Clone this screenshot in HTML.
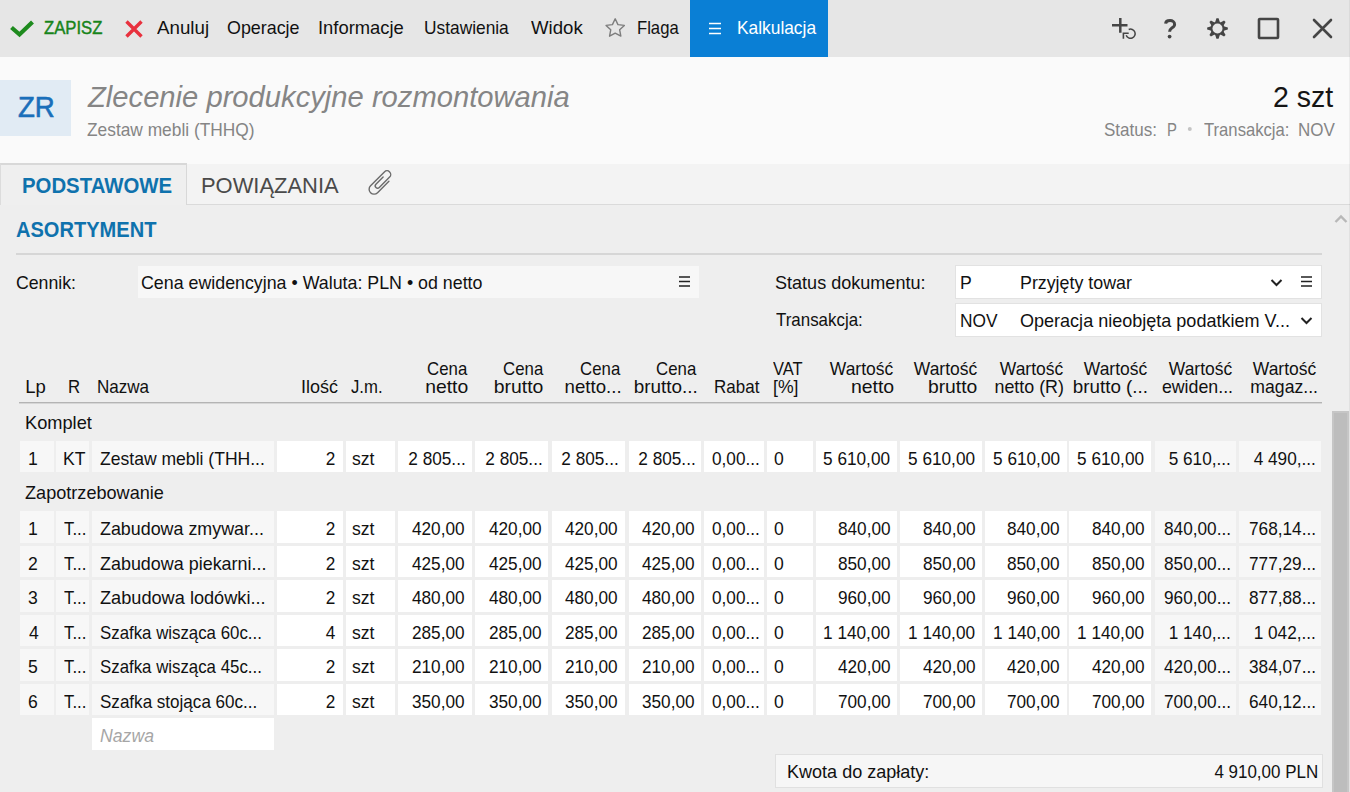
<!DOCTYPE html><html><head><meta charset="utf-8"><style>html,body{margin:0;padding:0;width:1350px;height:792px;overflow:hidden;background:#eeeeee;}.t{position:absolute;white-space:nowrap;}</style></head><body>
<div style="position:absolute;left:0px;top:0px;width:1350px;height:57px;background:#e6e6e6;"></div>
<div style="position:absolute;left:0px;top:57px;width:1350px;height:107px;background:#fafafa;"></div>
<div style="position:absolute;left:0px;top:164px;width:1350px;height:40px;background:#f3f3f3;"></div>
<div style="position:absolute;left:0px;top:204px;width:1350px;height:1px;background:#dadada;"></div>
<div style="position:absolute;left:0px;top:205px;width:1350px;height:587px;background:#eeeeee;"></div>
<div style="position:absolute;left:0px;top:163px;width:187px;height:42px;background:#efefef;box-sizing:border-box;border-top:2px solid #d8d8d8;border-right:1px solid #d8d8d8;border-left:1px solid #dcdcdc;"></div>
<svg style="position:absolute;left:8px;top:16.8px" width="30" height="22" viewBox="0 0 30 22"><polyline points="3.5,10.5 11.5,17.5 24.5,5" fill="none" stroke="#1e8b1e" stroke-width="4.2" stroke-linejoin="miter"/></svg>
<div class="t" style="left:44.40px;top:19.33px;color:#17841a;font-size:18.5px;line-height:18.5px;font-weight:400;font-style:normal;font-family:'Liberation Sans',sans-serif;-webkit-text-stroke:0.45px currentColor;transform:scaleX(0.9015);transform-origin:left 0;">ZAPISZ</div>
<svg style="position:absolute;left:122px;top:17px" width="24" height="24" viewBox="0 0 24 24"><path d="M4.5 4.5 L19.5 19.5 M19.5 4.5 L4.5 19.5" stroke="#e8313e" stroke-width="3.4" fill="none"/></svg>
<div class="t" style="left:157.00px;top:19.33px;color:#111;font-size:18.5px;line-height:18.5px;font-weight:400;font-style:normal;font-family:'Liberation Sans',sans-serif;transform:scaleX(1.0120);transform-origin:left 0;">Anuluj</div>
<div class="t" style="left:227.03px;top:19.33px;color:#111;font-size:18.5px;line-height:18.5px;font-weight:400;font-style:normal;font-family:'Liberation Sans',sans-serif;transform:scaleX(0.9658);transform-origin:left 0;">Operacje</div>
<div class="t" style="left:317.61px;top:19.33px;color:#111;font-size:18.5px;line-height:18.5px;font-weight:400;font-style:normal;font-family:'Liberation Sans',sans-serif;transform:scaleX(0.9929);transform-origin:left 0;">Informacje</div>
<div class="t" style="left:423.76px;top:19.33px;color:#111;font-size:18.5px;line-height:18.5px;font-weight:400;font-style:normal;font-family:'Liberation Sans',sans-serif;transform:scaleX(0.9367);transform-origin:left 0;">Ustawienia</div>
<div class="t" style="left:530.70px;top:19.33px;color:#111;font-size:18.5px;line-height:18.5px;font-weight:400;font-style:normal;font-family:'Liberation Sans',sans-serif;transform:scaleX(1.0059);transform-origin:left 0;">Widok</div>
<svg style="position:absolute;left:603px;top:16px" width="24" height="23" viewBox="0 0 24 23"><polygon points="12.20,2.80 14.96,8.60 21.33,9.43 16.67,13.85 17.84,20.17 12.20,17.10 6.56,20.17 7.73,13.85 3.07,9.43 9.44,8.60" fill="none" stroke="#7d7d7d" stroke-width="1.4" stroke-linejoin="round"/></svg>
<div class="t" style="left:636.90px;top:19.33px;color:#111;font-size:18.5px;line-height:18.5px;font-weight:400;font-style:normal;font-family:'Liberation Sans',sans-serif;transform:scaleX(0.9000);transform-origin:left 0;">Flaga</div>
<div style="position:absolute;left:690px;top:0px;width:138px;height:57px;background:#0a7fd5;"></div>
<svg style="position:absolute;left:707px;top:20px" width="16" height="16" viewBox="0 0 16 16"><path d="M2 3.5 H14 M2 8.5 H14 M2 13.5 H14" stroke="#fff" stroke-width="1.5"/></svg>
<div class="t" style="left:737.06px;top:19.33px;color:#fff;font-size:18.5px;line-height:18.5px;font-weight:400;font-style:normal;font-family:'Liberation Sans',sans-serif;transform:scaleX(0.9373);transform-origin:left 0;">Kalkulacja</div>
<svg style="position:absolute;left:1100px;top:10px" width="40" height="34" viewBox="0 0 40 34"><path d="M12 15.3 H27.5 M20.3 8 V22.7" stroke="#454545" stroke-width="2.5"/><path d="M28.7 19.5 A4.6 4.6 0 1 1 26.2 25.2" fill="none" stroke="#454545" stroke-width="1.5"/><path d="M28.7 23.3 H23.4 V28.7" fill="none" stroke="#454545" stroke-width="1.6"/></svg>
<svg style="position:absolute;left:1160px;top:16px" width="20" height="26" viewBox="0 0 20 26"><path d="M5.6 7.6 C5.8 5.2 7.6 4.5 10 4.5 C12.6 4.5 14.6 6 14.6 8.4 C14.6 10.4 13.2 11.2 11.6 12.2 C10.3 13 9.6 13.6 9.6 15.8" fill="none" stroke="#454545" stroke-width="3"/><circle cx="9.6" cy="20.6" r="1.9" fill="#454545"/></svg>
<svg style="position:absolute;left:1207px;top:18px" width="21" height="21" viewBox="0 0 21 21"><polygon points="7.86,4.13 8.39,3.61 9.41,0.16 11.59,0.16 12.61,3.61 13.14,4.13 13.88,4.14 17.04,2.42 18.58,3.96 16.86,7.12 16.87,7.86 17.39,8.39 20.84,9.41 20.84,11.59 17.39,12.61 16.87,13.14 16.86,13.88 18.58,17.04 17.04,18.58 13.88,16.86 13.14,16.87 12.61,17.39 11.59,20.84 9.41,20.84 8.39,17.39 7.86,16.87 7.12,16.86 3.96,18.58 2.42,17.04 4.14,13.88 4.13,13.14 3.61,12.61 0.16,11.59 0.16,9.41 3.61,8.39 4.13,7.86 4.14,7.12 2.42,3.96 3.96,2.42 7.12,4.14" fill="#454545"/><circle cx="10.5" cy="10.5" r="5.0" fill="#e6e6e6"/></svg>
<svg style="position:absolute;left:1256px;top:16px" width="25" height="25" viewBox="0 0 25 25"><rect x="3" y="3" width="19" height="19" fill="none" stroke="#454545" stroke-width="2.6" rx="0.8"/></svg>
<svg style="position:absolute;left:1310px;top:16px" width="25" height="25" viewBox="0 0 25 25"><path d="M4 4 L21 21 M21 4 L4 21" stroke="#454545" stroke-width="2.6" stroke-linecap="round"/></svg>
<div style="position:absolute;left:0px;top:80px;width:71px;height:56px;background:#e1ebf4;"></div>
<div class="t" style="left:17.80px;top:93.14px;color:#1a6fba;font-size:29px;line-height:29px;font-weight:400;font-style:normal;font-family:'Liberation Sans',sans-serif;-webkit-text-stroke:0.6px currentColor;transform:scaleX(0.9526);transform-origin:left 0;">ZR</div>
<div class="t" style="left:87.51px;top:82.94px;color:#858585;font-size:29px;line-height:29px;font-weight:400;font-style:italic;font-family:'Liberation Sans',sans-serif;transform:scaleX(1.0063);transform-origin:left 0;">Zlecenie produkcyjne rozmontowania</div>
<div class="t" style="left:87.40px;top:121.71px;color:#858585;font-size:17.7px;line-height:17.7px;font-weight:400;font-style:normal;font-family:'Liberation Sans',sans-serif;transform:scaleX(0.9800);transform-origin:left 0;">Zestaw mebli (THHQ)</div>
<div class="t" style="left:1272.00px;top:83.24px;color:#151515;font-size:29px;line-height:29px;font-weight:400;font-style:normal;font-family:'Liberation Sans',sans-serif;transform:scaleX(0.9833);transform-origin:right 0;">2 szt</div>
<div class="t" style="left:1104.44px;top:121.71px;color:#858585;font-size:17.7px;line-height:17.7px;font-weight:400;font-style:normal;font-family:'Liberation Sans',sans-serif;transform:scaleX(0.9623);transform-origin:left 0;">Status:</div>
<div class="t" style="left:1166.76px;top:121.71px;color:#858585;font-size:17.7px;line-height:17.7px;font-weight:400;font-style:normal;font-family:'Liberation Sans',sans-serif;transform:scaleX(0.8400);transform-origin:left 0;">P</div>
<svg style="position:absolute;left:1187px;top:126px" width="6" height="6" viewBox="0 0 6 6"><circle cx="2.8" cy="3" r="2" fill="#c4c4c4"/></svg>
<div class="t" style="left:1203.60px;top:121.71px;color:#858585;font-size:17.7px;line-height:17.7px;font-weight:400;font-style:normal;font-family:'Liberation Sans',sans-serif;transform:scaleX(0.9416);transform-origin:left 0;">Transakcja:</div>
<div class="t" style="left:1297.64px;top:121.71px;color:#858585;font-size:17.7px;line-height:17.7px;font-weight:400;font-style:normal;font-family:'Liberation Sans',sans-serif;transform:scaleX(0.9622);transform-origin:left 0;">NOV</div>
<div class="t" style="left:22.37px;top:174.57px;color:#0f72ad;font-size:22px;line-height:22px;font-weight:700;font-style:normal;font-family:'Liberation Sans',sans-serif;transform:scaleX(0.9255);transform-origin:left 0;">PODSTAWOWE</div>
<div class="t" style="left:201.01px;top:174.57px;color:#4a4a4a;font-size:22px;line-height:22px;font-weight:400;font-style:normal;font-family:'Liberation Sans',sans-serif;transform:scaleX(0.9963);transform-origin:left 0;">POWIĄZANIA</div>
<svg style="position:absolute;left:360px;top:160px" width="42" height="42" viewBox="0 0 42 42"><g transform="translate(20.5,22.7) rotate(45)"><path d="M5 -6.9 L5 9.15 A4.95 4.95 0 0 1 -4.9 9.15 L-4.9 -10.4 A3.7 3.7 0 0 1 2.5 -10.4 L2.5 4.25 A2.35 2.35 0 0 1 -2.2 4.25 L-2.2 -5.9" fill="none" stroke="#6a6a6a" stroke-width="1.4" stroke-linecap="round"/></g></svg>
<div class="t" style="left:16.09px;top:218.87px;color:#0f72ad;font-size:22px;line-height:22px;font-weight:700;font-style:normal;font-family:'Liberation Sans',sans-serif;transform:scaleX(0.9118);transform-origin:left 0;">ASORTYMENT</div>
<div style="position:absolute;left:16px;top:253px;width:1306px;height:2px;background:#d6d6d6;"></div>
<svg style="position:absolute;left:1333px;top:212px" width="16" height="14" viewBox="0 0 16 14"><polyline points="2.5,10 8,4.5 13.5,10" fill="none" stroke="#b8b8b8" stroke-width="2.4"/></svg>
<div class="t" style="left:16.34px;top:273.63px;color:#111;font-size:18.5px;line-height:18.5px;font-weight:400;font-style:normal;font-family:'Liberation Sans',sans-serif;transform:scaleX(0.9567);transform-origin:left 0;">Cennik:</div>
<div style="position:absolute;left:138px;top:266px;width:561px;height:32px;background:#f7f7f7;"></div>
<div class="t" style="left:140.94px;top:273.63px;color:#111;font-size:18.5px;line-height:18.5px;font-weight:400;font-style:normal;font-family:'Liberation Sans',sans-serif;transform:scaleX(0.9626);transform-origin:left 0;">Cena ewidencyjna • Waluta: PLN • od netto</div>
<svg style="position:absolute;left:677px;top:274px" width="15" height="15" viewBox="0 0 15 15"><path d="M2 3 H13 M2 7.5 H13 M2 12 H13" stroke="#222" stroke-width="1.6"/></svg>
<div class="t" style="left:775.12px;top:274.03px;color:#111;font-size:18.5px;line-height:18.5px;font-weight:400;font-style:normal;font-family:'Liberation Sans',sans-serif;transform:scaleX(0.9757);transform-origin:left 0;">Status dokumentu:</div>
<div class="t" style="left:775.90px;top:311.33px;color:#111;font-size:18.5px;line-height:18.5px;font-weight:400;font-style:normal;font-family:'Liberation Sans',sans-serif;transform:scaleX(0.9140);transform-origin:left 0;">Transakcja:</div>
<div style="position:absolute;left:955px;top:265px;width:367px;height:34px;background:#ffffff;box-sizing:border-box;border:1px solid #e2e2e2;"></div>
<div class="t" style="left:959.65px;top:273.83px;color:#111;font-size:18.5px;line-height:18.5px;font-weight:400;font-style:normal;font-family:'Liberation Sans',sans-serif;transform:scaleX(0.9545);transform-origin:left 0;">P</div>
<div class="t" style="left:1019.94px;top:273.83px;color:#111;font-size:18.5px;line-height:18.5px;font-weight:400;font-style:normal;font-family:'Liberation Sans',sans-serif;transform:scaleX(0.9626);transform-origin:left 0;">Przyjęty towar</div>
<svg style="position:absolute;left:1269px;top:277px" width="15" height="12" viewBox="0 0 15 12"><polyline points="2.5,3 7.5,8 12.5,3" fill="none" stroke="#222" stroke-width="2"/></svg>
<svg style="position:absolute;left:1299px;top:274px" width="15" height="15" viewBox="0 0 15 15"><path d="M2 3 H13 M2 7.5 H13 M2 12 H13" stroke="#222" stroke-width="1.6"/></svg>
<div style="position:absolute;left:955px;top:303px;width:367px;height:34px;background:#ffffff;box-sizing:border-box;border:1px solid #e2e2e2;"></div>
<div class="t" style="left:959.66px;top:311.63px;color:#111;font-size:18.5px;line-height:18.5px;font-weight:400;font-style:normal;font-family:'Liberation Sans',sans-serif;transform:scaleX(0.9359);transform-origin:left 0;">NOV</div>
<div class="t" style="left:1019.93px;top:311.63px;color:#111;font-size:18.5px;line-height:18.5px;font-weight:400;font-style:normal;font-family:'Liberation Sans',sans-serif;transform:scaleX(0.9745);transform-origin:left 0;">Operacja nieobjęta podatkiem V...</div>
<svg style="position:absolute;left:1299px;top:315px" width="15" height="12" viewBox="0 0 15 12"><polyline points="2.5,3 7.5,8 12.5,3" fill="none" stroke="#222" stroke-width="2"/></svg>
<div class="t" style="left:25.30px;top:378.33px;color:#111;font-size:18.5px;line-height:18.5px;font-weight:400;font-style:normal;font-family:'Liberation Sans',sans-serif;">Lp</div>
<div class="t" style="left:67.79px;top:378.33px;color:#111;font-size:18.5px;line-height:18.5px;font-weight:400;font-style:normal;font-family:'Liberation Sans',sans-serif;transform:scaleX(0.9091);transform-origin:left 0;">R</div>
<div class="t" style="left:97.38px;top:378.33px;color:#111;font-size:18.5px;line-height:18.5px;font-weight:400;font-style:normal;font-family:'Liberation Sans',sans-serif;transform:scaleX(0.9214);transform-origin:left 0;">Nazwa</div>
<div class="t" style="left:300.30px;top:378.33px;color:#111;font-size:18.5px;line-height:18.5px;font-weight:400;font-style:normal;font-family:'Liberation Sans',sans-serif;transform:scaleX(0.9722);transform-origin:right 0;">Ilość</div>
<div class="t" style="left:350.90px;top:378.33px;color:#111;font-size:18.5px;line-height:18.5px;font-weight:400;font-style:normal;font-family:'Liberation Sans',sans-serif;transform:scaleX(0.9030);transform-origin:left 0;">J.m.</div>
<div class="t" style="left:422.58px;top:359.93px;color:#111;font-size:18.5px;line-height:18.5px;font-weight:400;font-style:normal;font-family:'Liberation Sans',sans-serif;transform:scaleX(0.9070);transform-origin:right 0;">Cena</div>
<div class="t" style="left:426.65px;top:378.33px;color:#111;font-size:18.5px;line-height:18.5px;font-weight:400;font-style:normal;font-family:'Liberation Sans',sans-serif;transform:scaleX(1.0436);transform-origin:right 0;">netto</div>
<div class="t" style="left:499.18px;top:359.93px;color:#111;font-size:18.5px;line-height:18.5px;font-weight:400;font-style:normal;font-family:'Liberation Sans',sans-serif;transform:scaleX(0.9070);transform-origin:right 0;">Cena</div>
<div class="t" style="left:496.21px;top:378.33px;color:#111;font-size:18.5px;line-height:18.5px;font-weight:400;font-style:normal;font-family:'Liberation Sans',sans-serif;transform:scaleX(1.0478);transform-origin:right 0;">brutto</div>
<div class="t" style="left:575.78px;top:359.93px;color:#111;font-size:18.5px;line-height:18.5px;font-weight:400;font-style:normal;font-family:'Liberation Sans',sans-serif;transform:scaleX(0.9070);transform-origin:right 0;">Cena</div>
<div class="t" style="left:564.81px;top:378.33px;color:#111;font-size:18.5px;line-height:18.5px;font-weight:400;font-style:normal;font-family:'Liberation Sans',sans-serif;transform:scaleX(1.0074);transform-origin:right 0;">netto...</div>
<div class="t" style="left:652.38px;top:359.93px;color:#111;font-size:18.5px;line-height:18.5px;font-weight:400;font-style:normal;font-family:'Liberation Sans',sans-serif;transform:scaleX(0.9070);transform-origin:right 0;">Cena</div>
<div class="t" style="left:635.44px;top:378.33px;color:#111;font-size:18.5px;line-height:18.5px;font-weight:400;font-style:normal;font-family:'Liberation Sans',sans-serif;transform:scaleX(1.0217);transform-origin:right 0;">brutto...</div>
<div class="t" style="left:710.27px;top:378.33px;color:#111;font-size:18.5px;line-height:18.5px;font-weight:400;font-style:normal;font-family:'Liberation Sans',sans-serif;transform:scaleX(0.9167);transform-origin:right 0;">Rabat</div>
<div class="t" style="left:773.20px;top:359.93px;color:#111;font-size:18.5px;line-height:18.5px;font-weight:400;font-style:normal;font-family:'Liberation Sans',sans-serif;transform:scaleX(0.8909);transform-origin:left 0;">VAT</div>
<div class="t" style="left:772.95px;top:378.33px;color:#111;font-size:18.5px;line-height:18.5px;font-weight:400;font-style:normal;font-family:'Liberation Sans',sans-serif;transform:scaleX(0.9520);transform-origin:left 0;">[%]</div>
<div class="t" style="left:826.19px;top:359.93px;color:#111;font-size:18.5px;line-height:18.5px;font-weight:400;font-style:normal;font-family:'Liberation Sans',sans-serif;transform:scaleX(0.9433);transform-origin:right 0;">Wartość</div>
<div class="t" style="left:853.26px;top:378.33px;color:#111;font-size:18.5px;line-height:18.5px;font-weight:400;font-style:normal;font-family:'Liberation Sans',sans-serif;transform:scaleX(1.0513);transform-origin:right 0;">netto</div>
<div class="t" style="left:909.79px;top:359.93px;color:#111;font-size:18.5px;line-height:18.5px;font-weight:400;font-style:normal;font-family:'Liberation Sans',sans-serif;transform:scaleX(0.9433);transform-origin:right 0;">Wartość</div>
<div class="t" style="left:929.81px;top:378.33px;color:#111;font-size:18.5px;line-height:18.5px;font-weight:400;font-style:normal;font-family:'Liberation Sans',sans-serif;transform:scaleX(1.0435);transform-origin:right 0;">brutto</div>
<div class="t" style="left:995.79px;top:359.93px;color:#111;font-size:18.5px;line-height:18.5px;font-weight:400;font-style:normal;font-family:'Liberation Sans',sans-serif;transform:scaleX(0.9433);transform-origin:right 0;">Wartość</div>
<div class="t" style="left:991.77px;top:378.33px;color:#111;font-size:18.5px;line-height:18.5px;font-weight:400;font-style:normal;font-family:'Liberation Sans',sans-serif;transform:scaleX(0.9657);transform-origin:right 0;">netto (R)</div>
<div class="t" style="left:1080.19px;top:359.93px;color:#111;font-size:18.5px;line-height:18.5px;font-weight:400;font-style:normal;font-family:'Liberation Sans',sans-serif;transform:scaleX(0.9433);transform-origin:right 0;">Wartość</div>
<div class="t" style="left:1074.22px;top:378.33px;color:#111;font-size:18.5px;line-height:18.5px;font-weight:400;font-style:normal;font-family:'Liberation Sans',sans-serif;transform:scaleX(1.0167);transform-origin:right 0;">brutto (...</div>
<div class="t" style="left:1164.99px;top:359.93px;color:#111;font-size:18.5px;line-height:18.5px;font-weight:400;font-style:normal;font-family:'Liberation Sans',sans-serif;transform:scaleX(0.9433);transform-origin:right 0;">Wartość</div>
<div class="t" style="left:1158.96px;top:378.33px;color:#111;font-size:18.5px;line-height:18.5px;font-weight:400;font-style:normal;font-family:'Liberation Sans',sans-serif;transform:scaleX(0.9611);transform-origin:right 0;">ewiden...</div>
<div class="t" style="left:1248.99px;top:359.93px;color:#111;font-size:18.5px;line-height:18.5px;font-weight:400;font-style:normal;font-family:'Liberation Sans',sans-serif;transform:scaleX(0.9433);transform-origin:right 0;">Wartość</div>
<div class="t" style="left:1246.91px;top:378.33px;color:#111;font-size:18.5px;line-height:18.5px;font-weight:400;font-style:normal;font-family:'Liberation Sans',sans-serif;transform:scaleX(0.9529);transform-origin:right 0;">magaz...</div>
<div style="position:absolute;left:19px;top:402px;width:1303px;height:1px;background:#b4b4b4;"></div>
<div style="position:absolute;left:19px;top:403px;width:1303px;height:1px;background:#d6d6d6;"></div>
<div class="t" style="left:25.31px;top:413.73px;color:#111;font-size:18.5px;line-height:18.5px;font-weight:400;font-style:normal;font-family:'Liberation Sans',sans-serif;transform:scaleX(0.9851);transform-origin:left 0;">Komplet</div>
<div style="position:absolute;left:20px;top:441px;width:34px;height:31px;background:#f7f7f7;"></div>
<div class="t" style="left:28.35px;top:450.33px;color:#111;font-size:18.5px;line-height:18.5px;font-weight:400;font-style:normal;font-family:'Liberation Sans',sans-serif;transform:scaleX(0.9500);transform-origin:left 0;">1</div>
<div style="position:absolute;left:56px;top:441px;width:33px;height:31px;background:#f7f7f7;"></div>
<div class="t" style="left:63.25px;top:450.33px;color:#111;font-size:18.5px;line-height:18.5px;font-weight:400;font-style:normal;font-family:'Liberation Sans',sans-serif;transform:scaleX(0.9500);transform-origin:left 0;">KT</div>
<div style="position:absolute;left:92px;top:441px;width:182px;height:31px;background:#f7f7f7;"></div>
<div class="t" style="left:100.05px;top:450.33px;color:#111;font-size:18.5px;line-height:18.5px;font-weight:400;font-style:normal;font-family:'Liberation Sans',sans-serif;transform:scaleX(0.9491);transform-origin:left 0;">Zestaw mebli (THH...</div>
<div style="position:absolute;left:277px;top:441px;width:66px;height:31px;background:#fff;"></div>
<div class="t" style="left:325.38px;top:450.33px;color:#111;font-size:18.5px;line-height:18.5px;font-weight:400;font-style:normal;font-family:'Liberation Sans',sans-serif;transform:scaleX(0.9300);transform-origin:right 0;">2</div>
<div style="position:absolute;left:346px;top:441px;width:49px;height:31px;background:#fff;"></div>
<div class="t" style="left:352.15px;top:450.33px;color:#111;font-size:18.5px;line-height:18.5px;font-weight:400;font-style:normal;font-family:'Liberation Sans',sans-serif;transform:scaleX(0.9500);transform-origin:left 0;">szt</div>
<div style="position:absolute;left:398px;top:441px;width:74px;height:31px;background:#fff;"></div>
<div class="t" style="left:404.08px;top:450.33px;color:#111;font-size:18.5px;line-height:18.5px;font-weight:400;font-style:normal;font-family:'Liberation Sans',sans-serif;transform:scaleX(0.9300);transform-origin:right 0;">2 805...</div>
<div style="position:absolute;left:475px;top:441px;width:73px;height:31px;background:#fff;"></div>
<div class="t" style="left:480.58px;top:450.33px;color:#111;font-size:18.5px;line-height:18.5px;font-weight:400;font-style:normal;font-family:'Liberation Sans',sans-serif;transform:scaleX(0.9300);transform-origin:right 0;">2 805...</div>
<div style="position:absolute;left:552px;top:441px;width:73px;height:31px;background:#fff;"></div>
<div class="t" style="left:557.28px;top:450.33px;color:#111;font-size:18.5px;line-height:18.5px;font-weight:400;font-style:normal;font-family:'Liberation Sans',sans-serif;transform:scaleX(0.9300);transform-origin:right 0;">2 805...</div>
<div style="position:absolute;left:629px;top:441px;width:72px;height:31px;background:#fff;"></div>
<div class="t" style="left:633.88px;top:450.33px;color:#111;font-size:18.5px;line-height:18.5px;font-weight:400;font-style:normal;font-family:'Liberation Sans',sans-serif;transform:scaleX(0.9300);transform-origin:right 0;">2 805...</div>
<div style="position:absolute;left:704px;top:441px;width:60px;height:31px;background:#fff;"></div>
<div class="t" style="left:712.47px;top:450.33px;color:#111;font-size:18.5px;line-height:18.5px;font-weight:400;font-style:normal;font-family:'Liberation Sans',sans-serif;transform:scaleX(0.9286);transform-origin:left 0;">0,00...</div>
<div style="position:absolute;left:767px;top:441px;width:46px;height:31px;background:#fff;"></div>
<div class="t" style="left:773.95px;top:450.33px;color:#111;font-size:18.5px;line-height:18.5px;font-weight:400;font-style:normal;font-family:'Liberation Sans',sans-serif;transform:scaleX(0.9500);transform-origin:left 0;">0</div>
<div style="position:absolute;left:816px;top:441px;width:81px;height:31px;background:#fff;"></div>
<div class="t" style="left:817.90px;top:450.33px;color:#111;font-size:18.5px;line-height:18.5px;font-weight:400;font-style:normal;font-family:'Liberation Sans',sans-serif;transform:scaleX(0.9300);transform-origin:right 0;">5 610,00</div>
<div style="position:absolute;left:900px;top:441px;width:82px;height:31px;background:#fff;"></div>
<div class="t" style="left:902.70px;top:450.33px;color:#111;font-size:18.5px;line-height:18.5px;font-weight:400;font-style:normal;font-family:'Liberation Sans',sans-serif;transform:scaleX(0.9300);transform-origin:right 0;">5 610,00</div>
<div style="position:absolute;left:985px;top:441px;width:82px;height:31px;background:#fff;"></div>
<div class="t" style="left:987.50px;top:450.33px;color:#111;font-size:18.5px;line-height:18.5px;font-weight:400;font-style:normal;font-family:'Liberation Sans',sans-serif;transform:scaleX(0.9300);transform-origin:right 0;">5 610,00</div>
<div style="position:absolute;left:1069px;top:441px;width:82px;height:31px;background:#fff;"></div>
<div class="t" style="left:1071.90px;top:450.33px;color:#111;font-size:18.5px;line-height:18.5px;font-weight:400;font-style:normal;font-family:'Liberation Sans',sans-serif;transform:scaleX(0.9300);transform-origin:right 0;">5 610,00</div>
<div style="position:absolute;left:1155px;top:441px;width:81px;height:31px;background:#f7f7f7;"></div>
<div class="t" style="left:1163.57px;top:450.33px;color:#111;font-size:18.5px;line-height:18.5px;font-weight:400;font-style:normal;font-family:'Liberation Sans',sans-serif;transform:scaleX(0.9300);transform-origin:right 0;">5 610,...</div>
<div style="position:absolute;left:1239px;top:441px;width:82px;height:31px;background:#f7f7f7;"></div>
<div class="t" style="left:1248.77px;top:450.33px;color:#111;font-size:18.5px;line-height:18.5px;font-weight:400;font-style:normal;font-family:'Liberation Sans',sans-serif;transform:scaleX(0.9300);transform-origin:right 0;">4 490,...</div>
<div class="t" style="left:25.32px;top:484.33px;color:#111;font-size:18.5px;line-height:18.5px;font-weight:400;font-style:normal;font-family:'Liberation Sans',sans-serif;transform:scaleX(0.9786);transform-origin:left 0;">Zapotrzebowanie</div>
<div style="position:absolute;left:20px;top:511px;width:34px;height:32px;background:#f7f7f7;"></div>
<div class="t" style="left:28.35px;top:520.33px;color:#111;font-size:18.5px;line-height:18.5px;font-weight:400;font-style:normal;font-family:'Liberation Sans',sans-serif;transform:scaleX(0.9500);transform-origin:left 0;">1</div>
<div style="position:absolute;left:56px;top:511px;width:33px;height:32px;background:#f7f7f7;"></div>
<div class="t" style="left:64.20px;top:520.33px;color:#111;font-size:18.5px;line-height:18.5px;font-weight:400;font-style:normal;font-family:'Liberation Sans',sans-serif;transform:scaleX(0.9087);transform-origin:left 0;">T...</div>
<div style="position:absolute;left:92px;top:511px;width:182px;height:32px;background:#f7f7f7;"></div>
<div class="t" style="left:100.03px;top:520.33px;color:#111;font-size:18.5px;line-height:18.5px;font-weight:400;font-style:normal;font-family:'Liberation Sans',sans-serif;transform:scaleX(0.9659);transform-origin:left 0;">Zabudowa zmywar...</div>
<div style="position:absolute;left:277px;top:511px;width:66px;height:32px;background:#fff;"></div>
<div class="t" style="left:325.38px;top:520.33px;color:#111;font-size:18.5px;line-height:18.5px;font-weight:400;font-style:normal;font-family:'Liberation Sans',sans-serif;transform:scaleX(0.9300);transform-origin:right 0;">2</div>
<div style="position:absolute;left:346px;top:511px;width:49px;height:32px;background:#fff;"></div>
<div class="t" style="left:352.15px;top:520.33px;color:#111;font-size:18.5px;line-height:18.5px;font-weight:400;font-style:normal;font-family:'Liberation Sans',sans-serif;transform:scaleX(0.9500);transform-origin:left 0;">szt</div>
<div style="position:absolute;left:398px;top:511px;width:74px;height:32px;background:#fff;"></div>
<div class="t" style="left:408.16px;top:520.33px;color:#111;font-size:18.5px;line-height:18.5px;font-weight:400;font-style:normal;font-family:'Liberation Sans',sans-serif;transform:scaleX(0.9300);transform-origin:right 0;">420,00</div>
<div style="position:absolute;left:475px;top:511px;width:73px;height:32px;background:#fff;"></div>
<div class="t" style="left:484.66px;top:520.33px;color:#111;font-size:18.5px;line-height:18.5px;font-weight:400;font-style:normal;font-family:'Liberation Sans',sans-serif;transform:scaleX(0.9300);transform-origin:right 0;">420,00</div>
<div style="position:absolute;left:552px;top:511px;width:73px;height:32px;background:#fff;"></div>
<div class="t" style="left:561.36px;top:520.33px;color:#111;font-size:18.5px;line-height:18.5px;font-weight:400;font-style:normal;font-family:'Liberation Sans',sans-serif;transform:scaleX(0.9300);transform-origin:right 0;">420,00</div>
<div style="position:absolute;left:629px;top:511px;width:72px;height:32px;background:#fff;"></div>
<div class="t" style="left:637.96px;top:520.33px;color:#111;font-size:18.5px;line-height:18.5px;font-weight:400;font-style:normal;font-family:'Liberation Sans',sans-serif;transform:scaleX(0.9300);transform-origin:right 0;">420,00</div>
<div style="position:absolute;left:704px;top:511px;width:60px;height:32px;background:#fff;"></div>
<div class="t" style="left:712.47px;top:520.33px;color:#111;font-size:18.5px;line-height:18.5px;font-weight:400;font-style:normal;font-family:'Liberation Sans',sans-serif;transform:scaleX(0.9286);transform-origin:left 0;">0,00...</div>
<div style="position:absolute;left:767px;top:511px;width:46px;height:32px;background:#fff;"></div>
<div class="t" style="left:773.95px;top:520.33px;color:#111;font-size:18.5px;line-height:18.5px;font-weight:400;font-style:normal;font-family:'Liberation Sans',sans-serif;transform:scaleX(0.9500);transform-origin:left 0;">0</div>
<div style="position:absolute;left:816px;top:511px;width:81px;height:32px;background:#fff;"></div>
<div class="t" style="left:833.86px;top:520.33px;color:#111;font-size:18.5px;line-height:18.5px;font-weight:400;font-style:normal;font-family:'Liberation Sans',sans-serif;transform:scaleX(0.9300);transform-origin:right 0;">840,00</div>
<div style="position:absolute;left:900px;top:511px;width:82px;height:32px;background:#fff;"></div>
<div class="t" style="left:918.66px;top:520.33px;color:#111;font-size:18.5px;line-height:18.5px;font-weight:400;font-style:normal;font-family:'Liberation Sans',sans-serif;transform:scaleX(0.9300);transform-origin:right 0;">840,00</div>
<div style="position:absolute;left:985px;top:511px;width:82px;height:32px;background:#fff;"></div>
<div class="t" style="left:1003.46px;top:520.33px;color:#111;font-size:18.5px;line-height:18.5px;font-weight:400;font-style:normal;font-family:'Liberation Sans',sans-serif;transform:scaleX(0.9300);transform-origin:right 0;">840,00</div>
<div style="position:absolute;left:1069px;top:511px;width:82px;height:32px;background:#fff;"></div>
<div class="t" style="left:1087.86px;top:520.33px;color:#111;font-size:18.5px;line-height:18.5px;font-weight:400;font-style:normal;font-family:'Liberation Sans',sans-serif;transform:scaleX(0.9300);transform-origin:right 0;">840,00</div>
<div style="position:absolute;left:1155px;top:511px;width:81px;height:32px;background:#f7f7f7;"></div>
<div class="t" style="left:1158.56px;top:520.33px;color:#111;font-size:18.5px;line-height:18.5px;font-weight:400;font-style:normal;font-family:'Liberation Sans',sans-serif;transform:scaleX(0.9300);transform-origin:right 0;">840,00...</div>
<div style="position:absolute;left:1239px;top:511px;width:82px;height:32px;background:#f7f7f7;"></div>
<div class="t" style="left:1243.76px;top:520.33px;color:#111;font-size:18.5px;line-height:18.5px;font-weight:400;font-style:normal;font-family:'Liberation Sans',sans-serif;transform:scaleX(0.9300);transform-origin:right 0;">768,14...</div>
<div style="position:absolute;left:20px;top:546px;width:34px;height:31px;background:#f7f7f7;"></div>
<div class="t" style="left:28.35px;top:555.33px;color:#111;font-size:18.5px;line-height:18.5px;font-weight:400;font-style:normal;font-family:'Liberation Sans',sans-serif;transform:scaleX(0.9500);transform-origin:left 0;">2</div>
<div style="position:absolute;left:56px;top:546px;width:33px;height:31px;background:#f7f7f7;"></div>
<div class="t" style="left:64.20px;top:555.33px;color:#111;font-size:18.5px;line-height:18.5px;font-weight:400;font-style:normal;font-family:'Liberation Sans',sans-serif;transform:scaleX(0.9087);transform-origin:left 0;">T...</div>
<div style="position:absolute;left:92px;top:546px;width:182px;height:31px;background:#f7f7f7;"></div>
<div class="t" style="left:100.03px;top:555.33px;color:#111;font-size:18.5px;line-height:18.5px;font-weight:400;font-style:normal;font-family:'Liberation Sans',sans-serif;transform:scaleX(0.9692);transform-origin:left 0;">Zabudowa piekarni...</div>
<div style="position:absolute;left:277px;top:546px;width:66px;height:31px;background:#fff;"></div>
<div class="t" style="left:325.38px;top:555.33px;color:#111;font-size:18.5px;line-height:18.5px;font-weight:400;font-style:normal;font-family:'Liberation Sans',sans-serif;transform:scaleX(0.9300);transform-origin:right 0;">2</div>
<div style="position:absolute;left:346px;top:546px;width:49px;height:31px;background:#fff;"></div>
<div class="t" style="left:352.15px;top:555.33px;color:#111;font-size:18.5px;line-height:18.5px;font-weight:400;font-style:normal;font-family:'Liberation Sans',sans-serif;transform:scaleX(0.9500);transform-origin:left 0;">szt</div>
<div style="position:absolute;left:398px;top:546px;width:74px;height:31px;background:#fff;"></div>
<div class="t" style="left:408.16px;top:555.33px;color:#111;font-size:18.5px;line-height:18.5px;font-weight:400;font-style:normal;font-family:'Liberation Sans',sans-serif;transform:scaleX(0.9300);transform-origin:right 0;">425,00</div>
<div style="position:absolute;left:475px;top:546px;width:73px;height:31px;background:#fff;"></div>
<div class="t" style="left:484.66px;top:555.33px;color:#111;font-size:18.5px;line-height:18.5px;font-weight:400;font-style:normal;font-family:'Liberation Sans',sans-serif;transform:scaleX(0.9300);transform-origin:right 0;">425,00</div>
<div style="position:absolute;left:552px;top:546px;width:73px;height:31px;background:#fff;"></div>
<div class="t" style="left:561.36px;top:555.33px;color:#111;font-size:18.5px;line-height:18.5px;font-weight:400;font-style:normal;font-family:'Liberation Sans',sans-serif;transform:scaleX(0.9300);transform-origin:right 0;">425,00</div>
<div style="position:absolute;left:629px;top:546px;width:72px;height:31px;background:#fff;"></div>
<div class="t" style="left:637.96px;top:555.33px;color:#111;font-size:18.5px;line-height:18.5px;font-weight:400;font-style:normal;font-family:'Liberation Sans',sans-serif;transform:scaleX(0.9300);transform-origin:right 0;">425,00</div>
<div style="position:absolute;left:704px;top:546px;width:60px;height:31px;background:#fff;"></div>
<div class="t" style="left:712.47px;top:555.33px;color:#111;font-size:18.5px;line-height:18.5px;font-weight:400;font-style:normal;font-family:'Liberation Sans',sans-serif;transform:scaleX(0.9286);transform-origin:left 0;">0,00...</div>
<div style="position:absolute;left:767px;top:546px;width:46px;height:31px;background:#fff;"></div>
<div class="t" style="left:773.95px;top:555.33px;color:#111;font-size:18.5px;line-height:18.5px;font-weight:400;font-style:normal;font-family:'Liberation Sans',sans-serif;transform:scaleX(0.9500);transform-origin:left 0;">0</div>
<div style="position:absolute;left:816px;top:546px;width:81px;height:31px;background:#fff;"></div>
<div class="t" style="left:833.86px;top:555.33px;color:#111;font-size:18.5px;line-height:18.5px;font-weight:400;font-style:normal;font-family:'Liberation Sans',sans-serif;transform:scaleX(0.9300);transform-origin:right 0;">850,00</div>
<div style="position:absolute;left:900px;top:546px;width:82px;height:31px;background:#fff;"></div>
<div class="t" style="left:918.66px;top:555.33px;color:#111;font-size:18.5px;line-height:18.5px;font-weight:400;font-style:normal;font-family:'Liberation Sans',sans-serif;transform:scaleX(0.9300);transform-origin:right 0;">850,00</div>
<div style="position:absolute;left:985px;top:546px;width:82px;height:31px;background:#fff;"></div>
<div class="t" style="left:1003.46px;top:555.33px;color:#111;font-size:18.5px;line-height:18.5px;font-weight:400;font-style:normal;font-family:'Liberation Sans',sans-serif;transform:scaleX(0.9300);transform-origin:right 0;">850,00</div>
<div style="position:absolute;left:1069px;top:546px;width:82px;height:31px;background:#fff;"></div>
<div class="t" style="left:1087.86px;top:555.33px;color:#111;font-size:18.5px;line-height:18.5px;font-weight:400;font-style:normal;font-family:'Liberation Sans',sans-serif;transform:scaleX(0.9300);transform-origin:right 0;">850,00</div>
<div style="position:absolute;left:1155px;top:546px;width:81px;height:31px;background:#f7f7f7;"></div>
<div class="t" style="left:1158.56px;top:555.33px;color:#111;font-size:18.5px;line-height:18.5px;font-weight:400;font-style:normal;font-family:'Liberation Sans',sans-serif;transform:scaleX(0.9300);transform-origin:right 0;">850,00...</div>
<div style="position:absolute;left:1239px;top:546px;width:82px;height:31px;background:#f7f7f7;"></div>
<div class="t" style="left:1243.76px;top:555.33px;color:#111;font-size:18.5px;line-height:18.5px;font-weight:400;font-style:normal;font-family:'Liberation Sans',sans-serif;transform:scaleX(0.9300);transform-origin:right 0;">777,29...</div>
<div style="position:absolute;left:20px;top:580px;width:34px;height:32px;background:#f7f7f7;"></div>
<div class="t" style="left:28.35px;top:589.33px;color:#111;font-size:18.5px;line-height:18.5px;font-weight:400;font-style:normal;font-family:'Liberation Sans',sans-serif;transform:scaleX(0.9500);transform-origin:left 0;">3</div>
<div style="position:absolute;left:56px;top:580px;width:33px;height:32px;background:#f7f7f7;"></div>
<div class="t" style="left:64.20px;top:589.33px;color:#111;font-size:18.5px;line-height:18.5px;font-weight:400;font-style:normal;font-family:'Liberation Sans',sans-serif;transform:scaleX(0.9087);transform-origin:left 0;">T...</div>
<div style="position:absolute;left:92px;top:580px;width:182px;height:32px;background:#f7f7f7;"></div>
<div class="t" style="left:100.02px;top:589.33px;color:#111;font-size:18.5px;line-height:18.5px;font-weight:400;font-style:normal;font-family:'Liberation Sans',sans-serif;transform:scaleX(0.9819);transform-origin:left 0;">Zabudowa lodówki...</div>
<div style="position:absolute;left:277px;top:580px;width:66px;height:32px;background:#fff;"></div>
<div class="t" style="left:325.38px;top:589.33px;color:#111;font-size:18.5px;line-height:18.5px;font-weight:400;font-style:normal;font-family:'Liberation Sans',sans-serif;transform:scaleX(0.9300);transform-origin:right 0;">2</div>
<div style="position:absolute;left:346px;top:580px;width:49px;height:32px;background:#fff;"></div>
<div class="t" style="left:352.15px;top:589.33px;color:#111;font-size:18.5px;line-height:18.5px;font-weight:400;font-style:normal;font-family:'Liberation Sans',sans-serif;transform:scaleX(0.9500);transform-origin:left 0;">szt</div>
<div style="position:absolute;left:398px;top:580px;width:74px;height:32px;background:#fff;"></div>
<div class="t" style="left:408.16px;top:589.33px;color:#111;font-size:18.5px;line-height:18.5px;font-weight:400;font-style:normal;font-family:'Liberation Sans',sans-serif;transform:scaleX(0.9300);transform-origin:right 0;">480,00</div>
<div style="position:absolute;left:475px;top:580px;width:73px;height:32px;background:#fff;"></div>
<div class="t" style="left:484.66px;top:589.33px;color:#111;font-size:18.5px;line-height:18.5px;font-weight:400;font-style:normal;font-family:'Liberation Sans',sans-serif;transform:scaleX(0.9300);transform-origin:right 0;">480,00</div>
<div style="position:absolute;left:552px;top:580px;width:73px;height:32px;background:#fff;"></div>
<div class="t" style="left:561.36px;top:589.33px;color:#111;font-size:18.5px;line-height:18.5px;font-weight:400;font-style:normal;font-family:'Liberation Sans',sans-serif;transform:scaleX(0.9300);transform-origin:right 0;">480,00</div>
<div style="position:absolute;left:629px;top:580px;width:72px;height:32px;background:#fff;"></div>
<div class="t" style="left:637.96px;top:589.33px;color:#111;font-size:18.5px;line-height:18.5px;font-weight:400;font-style:normal;font-family:'Liberation Sans',sans-serif;transform:scaleX(0.9300);transform-origin:right 0;">480,00</div>
<div style="position:absolute;left:704px;top:580px;width:60px;height:32px;background:#fff;"></div>
<div class="t" style="left:712.47px;top:589.33px;color:#111;font-size:18.5px;line-height:18.5px;font-weight:400;font-style:normal;font-family:'Liberation Sans',sans-serif;transform:scaleX(0.9286);transform-origin:left 0;">0,00...</div>
<div style="position:absolute;left:767px;top:580px;width:46px;height:32px;background:#fff;"></div>
<div class="t" style="left:773.95px;top:589.33px;color:#111;font-size:18.5px;line-height:18.5px;font-weight:400;font-style:normal;font-family:'Liberation Sans',sans-serif;transform:scaleX(0.9500);transform-origin:left 0;">0</div>
<div style="position:absolute;left:816px;top:580px;width:81px;height:32px;background:#fff;"></div>
<div class="t" style="left:833.86px;top:589.33px;color:#111;font-size:18.5px;line-height:18.5px;font-weight:400;font-style:normal;font-family:'Liberation Sans',sans-serif;transform:scaleX(0.9300);transform-origin:right 0;">960,00</div>
<div style="position:absolute;left:900px;top:580px;width:82px;height:32px;background:#fff;"></div>
<div class="t" style="left:918.66px;top:589.33px;color:#111;font-size:18.5px;line-height:18.5px;font-weight:400;font-style:normal;font-family:'Liberation Sans',sans-serif;transform:scaleX(0.9300);transform-origin:right 0;">960,00</div>
<div style="position:absolute;left:985px;top:580px;width:82px;height:32px;background:#fff;"></div>
<div class="t" style="left:1003.46px;top:589.33px;color:#111;font-size:18.5px;line-height:18.5px;font-weight:400;font-style:normal;font-family:'Liberation Sans',sans-serif;transform:scaleX(0.9300);transform-origin:right 0;">960,00</div>
<div style="position:absolute;left:1069px;top:580px;width:82px;height:32px;background:#fff;"></div>
<div class="t" style="left:1087.86px;top:589.33px;color:#111;font-size:18.5px;line-height:18.5px;font-weight:400;font-style:normal;font-family:'Liberation Sans',sans-serif;transform:scaleX(0.9300);transform-origin:right 0;">960,00</div>
<div style="position:absolute;left:1155px;top:580px;width:81px;height:32px;background:#f7f7f7;"></div>
<div class="t" style="left:1158.56px;top:589.33px;color:#111;font-size:18.5px;line-height:18.5px;font-weight:400;font-style:normal;font-family:'Liberation Sans',sans-serif;transform:scaleX(0.9300);transform-origin:right 0;">960,00...</div>
<div style="position:absolute;left:1239px;top:580px;width:82px;height:32px;background:#f7f7f7;"></div>
<div class="t" style="left:1243.76px;top:589.33px;color:#111;font-size:18.5px;line-height:18.5px;font-weight:400;font-style:normal;font-family:'Liberation Sans',sans-serif;transform:scaleX(0.9300);transform-origin:right 0;">877,88...</div>
<div style="position:absolute;left:20px;top:615px;width:34px;height:31px;background:#f7f7f7;"></div>
<div class="t" style="left:29.30px;top:624.33px;color:#111;font-size:18.5px;line-height:18.5px;font-weight:400;font-style:normal;font-family:'Liberation Sans',sans-serif;transform:scaleX(0.9500);transform-origin:left 0;">4</div>
<div style="position:absolute;left:56px;top:615px;width:33px;height:31px;background:#f7f7f7;"></div>
<div class="t" style="left:64.20px;top:624.33px;color:#111;font-size:18.5px;line-height:18.5px;font-weight:400;font-style:normal;font-family:'Liberation Sans',sans-serif;transform:scaleX(0.9087);transform-origin:left 0;">T...</div>
<div style="position:absolute;left:92px;top:615px;width:182px;height:31px;background:#f7f7f7;"></div>
<div class="t" style="left:100.09px;top:624.33px;color:#111;font-size:18.5px;line-height:18.5px;font-weight:400;font-style:normal;font-family:'Liberation Sans',sans-serif;transform:scaleX(0.9097);transform-origin:left 0;">Szafka wisząca 60c...</div>
<div style="position:absolute;left:277px;top:615px;width:66px;height:31px;background:#fff;"></div>
<div class="t" style="left:325.38px;top:624.33px;color:#111;font-size:18.5px;line-height:18.5px;font-weight:400;font-style:normal;font-family:'Liberation Sans',sans-serif;transform:scaleX(0.9300);transform-origin:right 0;">4</div>
<div style="position:absolute;left:346px;top:615px;width:49px;height:31px;background:#fff;"></div>
<div class="t" style="left:352.15px;top:624.33px;color:#111;font-size:18.5px;line-height:18.5px;font-weight:400;font-style:normal;font-family:'Liberation Sans',sans-serif;transform:scaleX(0.9500);transform-origin:left 0;">szt</div>
<div style="position:absolute;left:398px;top:615px;width:74px;height:31px;background:#fff;"></div>
<div class="t" style="left:408.16px;top:624.33px;color:#111;font-size:18.5px;line-height:18.5px;font-weight:400;font-style:normal;font-family:'Liberation Sans',sans-serif;transform:scaleX(0.9300);transform-origin:right 0;">285,00</div>
<div style="position:absolute;left:475px;top:615px;width:73px;height:31px;background:#fff;"></div>
<div class="t" style="left:484.66px;top:624.33px;color:#111;font-size:18.5px;line-height:18.5px;font-weight:400;font-style:normal;font-family:'Liberation Sans',sans-serif;transform:scaleX(0.9300);transform-origin:right 0;">285,00</div>
<div style="position:absolute;left:552px;top:615px;width:73px;height:31px;background:#fff;"></div>
<div class="t" style="left:561.36px;top:624.33px;color:#111;font-size:18.5px;line-height:18.5px;font-weight:400;font-style:normal;font-family:'Liberation Sans',sans-serif;transform:scaleX(0.9300);transform-origin:right 0;">285,00</div>
<div style="position:absolute;left:629px;top:615px;width:72px;height:31px;background:#fff;"></div>
<div class="t" style="left:637.96px;top:624.33px;color:#111;font-size:18.5px;line-height:18.5px;font-weight:400;font-style:normal;font-family:'Liberation Sans',sans-serif;transform:scaleX(0.9300);transform-origin:right 0;">285,00</div>
<div style="position:absolute;left:704px;top:615px;width:60px;height:31px;background:#fff;"></div>
<div class="t" style="left:712.47px;top:624.33px;color:#111;font-size:18.5px;line-height:18.5px;font-weight:400;font-style:normal;font-family:'Liberation Sans',sans-serif;transform:scaleX(0.9286);transform-origin:left 0;">0,00...</div>
<div style="position:absolute;left:767px;top:615px;width:46px;height:31px;background:#fff;"></div>
<div class="t" style="left:773.95px;top:624.33px;color:#111;font-size:18.5px;line-height:18.5px;font-weight:400;font-style:normal;font-family:'Liberation Sans',sans-serif;transform:scaleX(0.9500);transform-origin:left 0;">0</div>
<div style="position:absolute;left:816px;top:615px;width:81px;height:31px;background:#fff;"></div>
<div class="t" style="left:817.90px;top:624.33px;color:#111;font-size:18.5px;line-height:18.5px;font-weight:400;font-style:normal;font-family:'Liberation Sans',sans-serif;transform:scaleX(0.9300);transform-origin:right 0;">1 140,00</div>
<div style="position:absolute;left:900px;top:615px;width:82px;height:31px;background:#fff;"></div>
<div class="t" style="left:902.70px;top:624.33px;color:#111;font-size:18.5px;line-height:18.5px;font-weight:400;font-style:normal;font-family:'Liberation Sans',sans-serif;transform:scaleX(0.9300);transform-origin:right 0;">1 140,00</div>
<div style="position:absolute;left:985px;top:615px;width:82px;height:31px;background:#fff;"></div>
<div class="t" style="left:987.50px;top:624.33px;color:#111;font-size:18.5px;line-height:18.5px;font-weight:400;font-style:normal;font-family:'Liberation Sans',sans-serif;transform:scaleX(0.9300);transform-origin:right 0;">1 140,00</div>
<div style="position:absolute;left:1069px;top:615px;width:82px;height:31px;background:#fff;"></div>
<div class="t" style="left:1071.90px;top:624.33px;color:#111;font-size:18.5px;line-height:18.5px;font-weight:400;font-style:normal;font-family:'Liberation Sans',sans-serif;transform:scaleX(0.9300);transform-origin:right 0;">1 140,00</div>
<div style="position:absolute;left:1155px;top:615px;width:81px;height:31px;background:#f7f7f7;"></div>
<div class="t" style="left:1163.57px;top:624.33px;color:#111;font-size:18.5px;line-height:18.5px;font-weight:400;font-style:normal;font-family:'Liberation Sans',sans-serif;transform:scaleX(0.9300);transform-origin:right 0;">1 140,...</div>
<div style="position:absolute;left:1239px;top:615px;width:82px;height:31px;background:#f7f7f7;"></div>
<div class="t" style="left:1248.77px;top:624.33px;color:#111;font-size:18.5px;line-height:18.5px;font-weight:400;font-style:normal;font-family:'Liberation Sans',sans-serif;transform:scaleX(0.9300);transform-origin:right 0;">1 042,...</div>
<div style="position:absolute;left:20px;top:649px;width:34px;height:32px;background:#f7f7f7;"></div>
<div class="t" style="left:28.35px;top:658.33px;color:#111;font-size:18.5px;line-height:18.5px;font-weight:400;font-style:normal;font-family:'Liberation Sans',sans-serif;transform:scaleX(0.9500);transform-origin:left 0;">5</div>
<div style="position:absolute;left:56px;top:649px;width:33px;height:32px;background:#f7f7f7;"></div>
<div class="t" style="left:64.20px;top:658.33px;color:#111;font-size:18.5px;line-height:18.5px;font-weight:400;font-style:normal;font-family:'Liberation Sans',sans-serif;transform:scaleX(0.9087);transform-origin:left 0;">T...</div>
<div style="position:absolute;left:92px;top:649px;width:182px;height:32px;background:#f7f7f7;"></div>
<div class="t" style="left:100.09px;top:658.33px;color:#111;font-size:18.5px;line-height:18.5px;font-weight:400;font-style:normal;font-family:'Liberation Sans',sans-serif;transform:scaleX(0.9097);transform-origin:left 0;">Szafka wisząca 45c...</div>
<div style="position:absolute;left:277px;top:649px;width:66px;height:32px;background:#fff;"></div>
<div class="t" style="left:325.38px;top:658.33px;color:#111;font-size:18.5px;line-height:18.5px;font-weight:400;font-style:normal;font-family:'Liberation Sans',sans-serif;transform:scaleX(0.9300);transform-origin:right 0;">2</div>
<div style="position:absolute;left:346px;top:649px;width:49px;height:32px;background:#fff;"></div>
<div class="t" style="left:352.15px;top:658.33px;color:#111;font-size:18.5px;line-height:18.5px;font-weight:400;font-style:normal;font-family:'Liberation Sans',sans-serif;transform:scaleX(0.9500);transform-origin:left 0;">szt</div>
<div style="position:absolute;left:398px;top:649px;width:74px;height:32px;background:#fff;"></div>
<div class="t" style="left:408.16px;top:658.33px;color:#111;font-size:18.5px;line-height:18.5px;font-weight:400;font-style:normal;font-family:'Liberation Sans',sans-serif;transform:scaleX(0.9300);transform-origin:right 0;">210,00</div>
<div style="position:absolute;left:475px;top:649px;width:73px;height:32px;background:#fff;"></div>
<div class="t" style="left:484.66px;top:658.33px;color:#111;font-size:18.5px;line-height:18.5px;font-weight:400;font-style:normal;font-family:'Liberation Sans',sans-serif;transform:scaleX(0.9300);transform-origin:right 0;">210,00</div>
<div style="position:absolute;left:552px;top:649px;width:73px;height:32px;background:#fff;"></div>
<div class="t" style="left:561.36px;top:658.33px;color:#111;font-size:18.5px;line-height:18.5px;font-weight:400;font-style:normal;font-family:'Liberation Sans',sans-serif;transform:scaleX(0.9300);transform-origin:right 0;">210,00</div>
<div style="position:absolute;left:629px;top:649px;width:72px;height:32px;background:#fff;"></div>
<div class="t" style="left:637.96px;top:658.33px;color:#111;font-size:18.5px;line-height:18.5px;font-weight:400;font-style:normal;font-family:'Liberation Sans',sans-serif;transform:scaleX(0.9300);transform-origin:right 0;">210,00</div>
<div style="position:absolute;left:704px;top:649px;width:60px;height:32px;background:#fff;"></div>
<div class="t" style="left:712.47px;top:658.33px;color:#111;font-size:18.5px;line-height:18.5px;font-weight:400;font-style:normal;font-family:'Liberation Sans',sans-serif;transform:scaleX(0.9286);transform-origin:left 0;">0,00...</div>
<div style="position:absolute;left:767px;top:649px;width:46px;height:32px;background:#fff;"></div>
<div class="t" style="left:773.95px;top:658.33px;color:#111;font-size:18.5px;line-height:18.5px;font-weight:400;font-style:normal;font-family:'Liberation Sans',sans-serif;transform:scaleX(0.9500);transform-origin:left 0;">0</div>
<div style="position:absolute;left:816px;top:649px;width:81px;height:32px;background:#fff;"></div>
<div class="t" style="left:833.86px;top:658.33px;color:#111;font-size:18.5px;line-height:18.5px;font-weight:400;font-style:normal;font-family:'Liberation Sans',sans-serif;transform:scaleX(0.9300);transform-origin:right 0;">420,00</div>
<div style="position:absolute;left:900px;top:649px;width:82px;height:32px;background:#fff;"></div>
<div class="t" style="left:918.66px;top:658.33px;color:#111;font-size:18.5px;line-height:18.5px;font-weight:400;font-style:normal;font-family:'Liberation Sans',sans-serif;transform:scaleX(0.9300);transform-origin:right 0;">420,00</div>
<div style="position:absolute;left:985px;top:649px;width:82px;height:32px;background:#fff;"></div>
<div class="t" style="left:1003.46px;top:658.33px;color:#111;font-size:18.5px;line-height:18.5px;font-weight:400;font-style:normal;font-family:'Liberation Sans',sans-serif;transform:scaleX(0.9300);transform-origin:right 0;">420,00</div>
<div style="position:absolute;left:1069px;top:649px;width:82px;height:32px;background:#fff;"></div>
<div class="t" style="left:1087.86px;top:658.33px;color:#111;font-size:18.5px;line-height:18.5px;font-weight:400;font-style:normal;font-family:'Liberation Sans',sans-serif;transform:scaleX(0.9300);transform-origin:right 0;">420,00</div>
<div style="position:absolute;left:1155px;top:649px;width:81px;height:32px;background:#f7f7f7;"></div>
<div class="t" style="left:1158.56px;top:658.33px;color:#111;font-size:18.5px;line-height:18.5px;font-weight:400;font-style:normal;font-family:'Liberation Sans',sans-serif;transform:scaleX(0.9300);transform-origin:right 0;">420,00...</div>
<div style="position:absolute;left:1239px;top:649px;width:82px;height:32px;background:#f7f7f7;"></div>
<div class="t" style="left:1243.76px;top:658.33px;color:#111;font-size:18.5px;line-height:18.5px;font-weight:400;font-style:normal;font-family:'Liberation Sans',sans-serif;transform:scaleX(0.9300);transform-origin:right 0;">384,07...</div>
<div style="position:absolute;left:20px;top:684px;width:34px;height:31px;background:#f7f7f7;"></div>
<div class="t" style="left:28.35px;top:693.33px;color:#111;font-size:18.5px;line-height:18.5px;font-weight:400;font-style:normal;font-family:'Liberation Sans',sans-serif;transform:scaleX(0.9500);transform-origin:left 0;">6</div>
<div style="position:absolute;left:56px;top:684px;width:33px;height:31px;background:#f7f7f7;"></div>
<div class="t" style="left:64.20px;top:693.33px;color:#111;font-size:18.5px;line-height:18.5px;font-weight:400;font-style:normal;font-family:'Liberation Sans',sans-serif;transform:scaleX(0.9087);transform-origin:left 0;">T...</div>
<div style="position:absolute;left:92px;top:684px;width:182px;height:31px;background:#f7f7f7;"></div>
<div class="t" style="left:100.08px;top:693.33px;color:#111;font-size:18.5px;line-height:18.5px;font-weight:400;font-style:normal;font-family:'Liberation Sans',sans-serif;transform:scaleX(0.9214);transform-origin:left 0;">Szafka stojąca 60c...</div>
<div style="position:absolute;left:277px;top:684px;width:66px;height:31px;background:#fff;"></div>
<div class="t" style="left:325.38px;top:693.33px;color:#111;font-size:18.5px;line-height:18.5px;font-weight:400;font-style:normal;font-family:'Liberation Sans',sans-serif;transform:scaleX(0.9300);transform-origin:right 0;">2</div>
<div style="position:absolute;left:346px;top:684px;width:49px;height:31px;background:#fff;"></div>
<div class="t" style="left:352.15px;top:693.33px;color:#111;font-size:18.5px;line-height:18.5px;font-weight:400;font-style:normal;font-family:'Liberation Sans',sans-serif;transform:scaleX(0.9500);transform-origin:left 0;">szt</div>
<div style="position:absolute;left:398px;top:684px;width:74px;height:31px;background:#fff;"></div>
<div class="t" style="left:408.16px;top:693.33px;color:#111;font-size:18.5px;line-height:18.5px;font-weight:400;font-style:normal;font-family:'Liberation Sans',sans-serif;transform:scaleX(0.9300);transform-origin:right 0;">350,00</div>
<div style="position:absolute;left:475px;top:684px;width:73px;height:31px;background:#fff;"></div>
<div class="t" style="left:484.66px;top:693.33px;color:#111;font-size:18.5px;line-height:18.5px;font-weight:400;font-style:normal;font-family:'Liberation Sans',sans-serif;transform:scaleX(0.9300);transform-origin:right 0;">350,00</div>
<div style="position:absolute;left:552px;top:684px;width:73px;height:31px;background:#fff;"></div>
<div class="t" style="left:561.36px;top:693.33px;color:#111;font-size:18.5px;line-height:18.5px;font-weight:400;font-style:normal;font-family:'Liberation Sans',sans-serif;transform:scaleX(0.9300);transform-origin:right 0;">350,00</div>
<div style="position:absolute;left:629px;top:684px;width:72px;height:31px;background:#fff;"></div>
<div class="t" style="left:637.96px;top:693.33px;color:#111;font-size:18.5px;line-height:18.5px;font-weight:400;font-style:normal;font-family:'Liberation Sans',sans-serif;transform:scaleX(0.9300);transform-origin:right 0;">350,00</div>
<div style="position:absolute;left:704px;top:684px;width:60px;height:31px;background:#fff;"></div>
<div class="t" style="left:712.47px;top:693.33px;color:#111;font-size:18.5px;line-height:18.5px;font-weight:400;font-style:normal;font-family:'Liberation Sans',sans-serif;transform:scaleX(0.9286);transform-origin:left 0;">0,00...</div>
<div style="position:absolute;left:767px;top:684px;width:46px;height:31px;background:#fff;"></div>
<div class="t" style="left:773.95px;top:693.33px;color:#111;font-size:18.5px;line-height:18.5px;font-weight:400;font-style:normal;font-family:'Liberation Sans',sans-serif;transform:scaleX(0.9500);transform-origin:left 0;">0</div>
<div style="position:absolute;left:816px;top:684px;width:81px;height:31px;background:#fff;"></div>
<div class="t" style="left:833.86px;top:693.33px;color:#111;font-size:18.5px;line-height:18.5px;font-weight:400;font-style:normal;font-family:'Liberation Sans',sans-serif;transform:scaleX(0.9300);transform-origin:right 0;">700,00</div>
<div style="position:absolute;left:900px;top:684px;width:82px;height:31px;background:#fff;"></div>
<div class="t" style="left:918.66px;top:693.33px;color:#111;font-size:18.5px;line-height:18.5px;font-weight:400;font-style:normal;font-family:'Liberation Sans',sans-serif;transform:scaleX(0.9300);transform-origin:right 0;">700,00</div>
<div style="position:absolute;left:985px;top:684px;width:82px;height:31px;background:#fff;"></div>
<div class="t" style="left:1003.46px;top:693.33px;color:#111;font-size:18.5px;line-height:18.5px;font-weight:400;font-style:normal;font-family:'Liberation Sans',sans-serif;transform:scaleX(0.9300);transform-origin:right 0;">700,00</div>
<div style="position:absolute;left:1069px;top:684px;width:82px;height:31px;background:#fff;"></div>
<div class="t" style="left:1087.86px;top:693.33px;color:#111;font-size:18.5px;line-height:18.5px;font-weight:400;font-style:normal;font-family:'Liberation Sans',sans-serif;transform:scaleX(0.9300);transform-origin:right 0;">700,00</div>
<div style="position:absolute;left:1155px;top:684px;width:81px;height:31px;background:#f7f7f7;"></div>
<div class="t" style="left:1158.56px;top:693.33px;color:#111;font-size:18.5px;line-height:18.5px;font-weight:400;font-style:normal;font-family:'Liberation Sans',sans-serif;transform:scaleX(0.9300);transform-origin:right 0;">700,00...</div>
<div style="position:absolute;left:1239px;top:684px;width:82px;height:31px;background:#f7f7f7;"></div>
<div class="t" style="left:1243.76px;top:693.33px;color:#111;font-size:18.5px;line-height:18.5px;font-weight:400;font-style:normal;font-family:'Liberation Sans',sans-serif;transform:scaleX(0.9300);transform-origin:right 0;">640,12...</div>
<div style="position:absolute;left:92px;top:718px;width:182px;height:32px;background:#ffffff;"></div>
<div class="t" style="left:100.12px;top:726.75px;color:#a6a6a6;font-size:18px;line-height:18px;font-weight:400;font-style:italic;font-family:'Liberation Sans',sans-serif;transform:scaleX(0.9811);transform-origin:left 0;">Nazwa</div>
<div style="position:absolute;left:775px;top:754px;width:548px;height:34px;background:#f6f6f6;box-sizing:border-box;border:1px solid #e0e0e0;"></div>
<div class="t" style="left:786.92px;top:763.13px;color:#111;font-size:18.5px;line-height:18.5px;font-weight:400;font-style:normal;font-family:'Liberation Sans',sans-serif;transform:scaleX(0.9750);transform-origin:left 0;">Kwota do zapłaty:</div>
<div class="t" style="left:1205.10px;top:763.13px;color:#111;font-size:18.5px;line-height:18.5px;font-weight:400;font-style:normal;font-family:'Liberation Sans',sans-serif;transform:scaleX(0.9170);transform-origin:right 0;">4 910,00 PLN</div>
<div style="position:absolute;left:1332px;top:411px;width:17px;height:381px;background:#bdbdbd;box-sizing:border-box;border:2px solid #c6c6c6;border-bottom:none;"></div>
<div style="position:absolute;left:1349px;top:0px;width:1px;height:792px;background:rgba(0,0,0,0.05);"></div>
</body></html>
